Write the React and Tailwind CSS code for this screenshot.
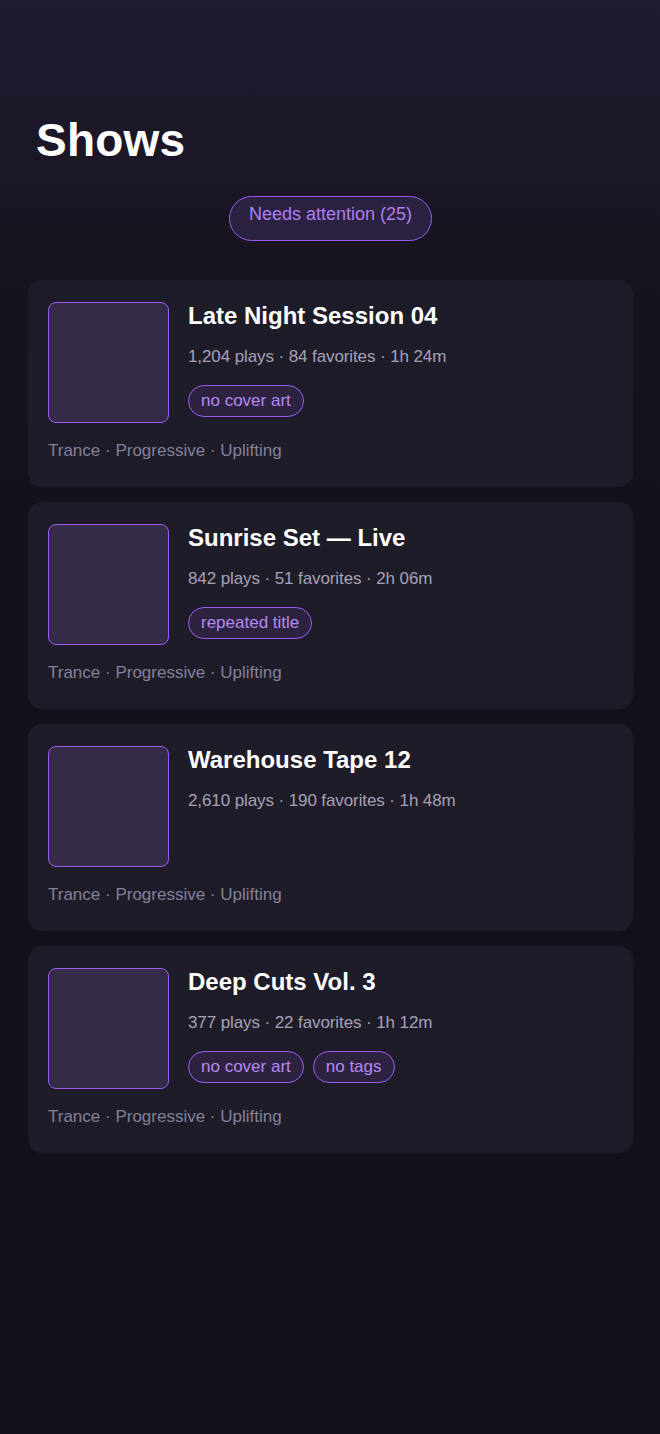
import React from 'react';

const shows = [
  { id: 1, title: 'Late Night Session 04', plays: '1,204', favorites: 84, length: '1h 24m', flags: ['no cover art'] },
  { id: 2, title: 'Sunrise Set — Live', plays: '842', favorites: 51, length: '2h 06m', flags: ['repeated title'] },
  { id: 3, title: 'Warehouse Tape 12', plays: '2,610', favorites: 190, length: '1h 48m', flags: [] },
  { id: 4, title: 'Deep Cuts Vol. 3', plays: '377', favorites: 22, length: '1h 12m', flags: ['no cover art', 'no tags'] },
];

const genres = ['Trance', 'Progressive', 'Uplifting'];

const ShowCard = ({ show }) => (
  <div className="bg-[#1f1c29] rounded-[14px] pt-[22px] pl-[20px] pr-[20px] h-[207px]">
    <div className="flex">
      <div className="w-[121px] h-[121px] shrink-0 rounded-[8px] border border-[#9a5cf5] bg-[#342b48]" />
      <div className="ml-[19px] flex flex-col">
        <h2 className="text-[24px] leading-[28px] font-bold text-white">{show.title}</h2>
        <p className="mt-[17px] text-[17px] leading-[20px] text-[#a6a1b5] tracking-[-0.1px]">
          {show.plays} plays · {show.favorites} favorites · {show.length}
        </p>
        {show.flags.length > 0 && (
          <div className="mt-[18px] flex gap-[9px]">
            {show.flags.map((flag) => (
              <span
                key={flag}
                className="h-[32px] px-[12px] flex items-center rounded-full border border-[#9a5cf5] bg-[#2d2340] text-[17px] text-[#b68af2]"
              >
                {flag}
              </span>
            ))}
          </div>
        )}
      </div>
    </div>
    <p className="mt-[18px] text-[17px] leading-[20px] text-[#84809a]">{genres.join(' · ')}</p>
  </div>
);

export default function App() {
  return (
    <div
      className="min-h-screen bg-[linear-gradient(to_bottom,#211b31_0px,#17141f_260px,#13111b_520px,#12101a_1434px)] pt-[114px] pb-[40px] pl-[28px] pr-[27px]"
      style={{ fontFamily: '"Liberation Sans", Arial, sans-serif' }}
    >
      <h1 className="pl-[8px] text-[46px] leading-[52px] font-bold text-white tracking-[0.2px]">Shows</h1>

      <div className="mt-[30px] flex justify-center">
        <button className="h-[45px] px-[19px] pt-[7px] flex items-start rounded-full border border-[#9a5cf5] bg-[#2a2240] text-[18px] leading-[21px] text-[#b07ff0]">
          Needs attention (25)
        </button>
      </div>

      <div className="mt-[39px] flex flex-col gap-[15px]">
        {shows.map((show) => (
          <ShowCard key={show.id} show={show} />
        ))}
      </div>
    </div>
  );
}
